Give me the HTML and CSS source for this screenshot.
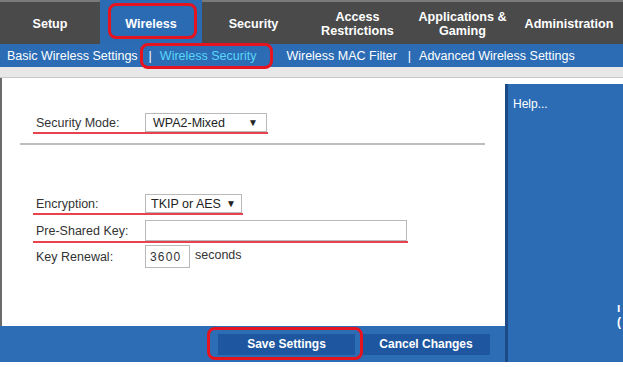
FILE: index.html
```html
<!DOCTYPE html>
<html>
<head>
<meta charset="utf-8">
<link rel="stylesheet" href="styles.css">
</head>
<body>
<div class="page">
  <nav class="topnav">
    <div class="tab">Setup</div>
    <div class="tab active">Wireless</div>
    <div class="tab">Security</div>
    <div class="tab">Access<br>Restrictions</div>
    <div class="tab">Applications &amp;<br>Gaming</div>
    <div class="tab">Administration</div>
  </nav>
  <div class="subnav">
    <span class="sub">Basic Wireless Settings</span>
    <span class="sep">|</span>
    <span class="sub current">Wireless Security</span>
    <span class="sub gap">Wireless MAC Filter</span>
    <span class="sep">|</span>
    <span class="sub">Advanced Wireless Settings</span>
  </div>
  <div class="strip"></div>
  <div class="main">
    <div class="content">
      <div class="form">
        <div class="row mark r1">
          <span class="label">Security Mode:</span>
          <span class="select s1"><span>WPA2-Mixed</span><span class="arrow">▼</span></span>
        </div>
        <div class="rule"></div>
        <div class="row mark r2">
          <span class="label">Encryption:</span>
          <span class="select s2"><span>TKIP or AES</span><span class="arrow">▼</span></span>
        </div>
        <div class="row mark r3">
          <span class="label">Pre-Shared Key:</span>
          <span class="input key"></span>
        </div>
        <div class="row r4">
          <span class="label">Key Renewal:</span>
          <span class="input renew">3600</span>
          <span class="unit">seconds</span>
        </div>
      </div>
      <div class="footer">
        <span class="btn save">Save Settings</span>
        <span class="btn cancel">Cancel Changes</span>
      </div>
    </div>
    <aside class="help">
      <div class="helptext">Help...</div>
      <div class="clip"><span class="c1">ı</span><span class="c2">(</span></div>
    </aside>
  </div>
  <div class="ring ring-wireless"></div>
  <div class="ring ring-sub"></div>
  <div class="ring ring-save"></div>
</div>
</body>
</html>
```
FILE: styles.css
```css
html, body {
  margin: 0;
  padding: 0;
  background: #ffffff;
}
body {
  font-family: "Liberation Sans", Arial, sans-serif;
  font-size: 13px;
  color: #333;
}
.page {
  position: relative;
  width: 623px;
  height: 367px;
  overflow: hidden;
}
.topnav {
  display: grid;
  grid-template-columns: 100px 102px 103px 105px 105px 108px;
  height: 44px;
  background: #4a4a4a;
  border-top: 2px solid #7a7a7a;
  box-sizing: border-box;
}
.tab {
  display: flex;
  align-items: center;
  justify-content: center;
  text-align: center;
  color: #ffffff;
  font-weight: bold;
  font-size: 12.6px;
  line-height: 13.5px;
  padding-top: 3px;
}
.tab.active {
  background: #2b6bb4;
  margin-top: -2px;
  padding-top: 5px;
}
.subnav {
  display: flex;
  align-items: center;
  height: 23px;
  background: #2b6cb5;
  color: #ffffff;
  font-size: 12.5px;
  padding-left: 7px;
  white-space: nowrap;
}
.sep {
  margin: 0 8px 0 11px;
}
.sub.current {
  color: #5ad6f7;
}
.sub.gap {
  margin-left: 30px;
}
.strip {
  height: 10px;
  background: #e8e8e8;
  border-bottom: 1px solid #c9c9c9;
}
.main {
  display: flex;
  height: 284px;
}
.content {
  width: 505px;
  display: flex;
  flex-direction: column;
}
.form {
  flex: 1;
  background: #ffffff;
  border-left: 2px solid #6a6a6a;
  padding-top: 35px;
}
.row {
  display: flex;
  align-items: center;
  padding-left: 34px;
  color: #333;
  white-space: nowrap;
  font-size: 12.5px;
}
.row.mark {
  width: fit-content;
  margin-left: 31px;
  padding-left: 3px;
  padding-right: 1px;
  border-bottom: 2px solid #e8424f;
}
.label {
  width: 109px;
}
.select {
  display: flex;
  align-items: center;
  justify-content: space-between;
  height: 19px;
  box-sizing: border-box;
  border: 1px solid #b9b9b9;
  padding: 0 8px 0 7px;
  color: #222;
  white-space: nowrap;
}
.arrow {
  font-size: 10px;
}
.s1 { width: 122px; }
.s2 { width: 97px; padding: 0 7px 0 5px; gap: 5px; }
.rule {
  height: 2px;
  background: #bdbdbd;
  margin: 9px 0 0 18px;
  width: 465px;
}
.r2 { margin-top: 49px; }
.r3 { margin-top: 5px; }
.r4 { margin-top: 2px; }
.input {
  display: flex;
  align-items: center;
  box-sizing: border-box;
  border: 1px solid #b9b9b9;
  height: 21px;
}
.key { width: 262px; }
.renew {
  width: 45px;
  height: 23px;
  padding-left: 4px;
  font-size: 12px;
  letter-spacing: 1.2px;
  color: #333;
}
.unit {
  margin-left: 5px;
  margin-top: -4px;
}
.footer {
  height: 36px;
  background: #2c6db5;
  display: flex;
  align-items: center;
  padding-left: 218px;
  gap: 7px;
}
.btn {
  display: flex;
  align-items: center;
  justify-content: center;
  height: 21px;
  background: #1e579f;
  color: #ffffff;
  font-weight: bold;
  font-size: 12px;
}
.save { width: 137px; }
.cancel { width: 128px; }
.help {
  flex: 1;
  margin-top: 6px;
  background: #2b6cb5;
  border-left: 3px solid #1b4a86;
  position: relative;
  color: #ffffff;
}
.helptext {
  padding: 13px 0 0 5px;
  font-size: 12px;
}
.clip {
  position: absolute;
  left: 109px;
  top: 218px;
  display: flex;
  flex-direction: column;
  font-weight: bold;
  font-size: 12px;
  line-height: 12px;
  gap: 2px;
}
.ring {
  position: absolute;
  border: 3px solid #e5141f;
  border-radius: 8px;
  box-sizing: border-box;
}
.ring-wireless {
  left: 108px;
  top: 3px;
  width: 89px;
  height: 36px;
}
.ring-sub {
  left: 140px;
  top: 43px;
  width: 133px;
  height: 26px;
}
.ring-save {
  left: 207px;
  top: 327px;
  width: 156px;
  height: 33px;
}
```
